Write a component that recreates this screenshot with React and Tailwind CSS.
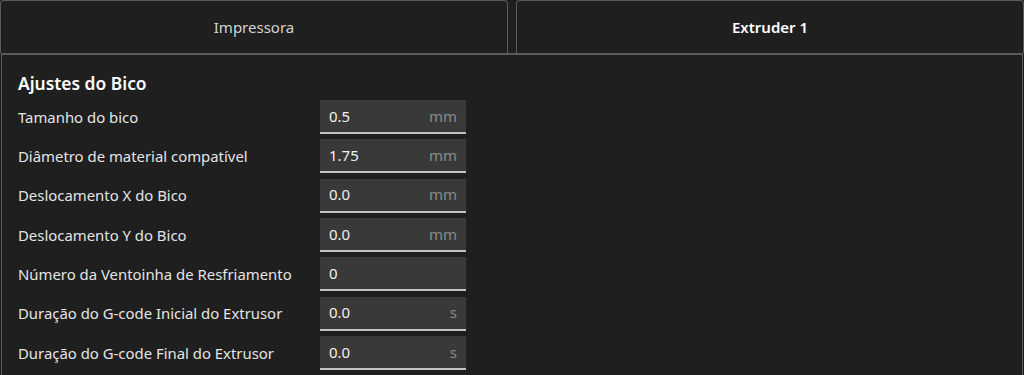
import React from 'react';

const rows = [
  { label: 'Tamanho do bico', value: '0.5', unit: 'mm' },
  { label: 'Diâmetro de material compatível', value: '1.75', unit: 'mm' },
  { label: 'Deslocamento X do Bico', value: '0.0', unit: 'mm' },
  { label: 'Deslocamento Y do Bico', value: '0.0', unit: 'mm' },
  { label: 'Número da Ventoinha de Resfriamento', value: '0', unit: '' },
  { label: 'Duração do G-code Inicial do Extrusor', value: '0.0', unit: 's' },
  { label: 'Duração do G-code Final do Extrusor', value: '0.0', unit: 's' },
];

const Tab = ({ label, active }) => (
  <div className="flex-1 h-[53px] border-t border-l border-r border-[#5a5a5a] rounded-t-[4px] flex items-center justify-center">
    <span
      className={`text-[15px] ${active ? 'font-semibold text-white' : 'text-[#d4d4d4]'}`}
    >
      {label}
    </span>
  </div>
);

const App = () => {
  return (
    <div
      className="w-[1024px] h-[375px] overflow-hidden bg-[#1f1f1f] flex flex-col"
      style={{ fontFamily: '"Noto Sans", "Open Sans", sans-serif' }}
    >
      <div className="flex gap-[8px]">
        <Tab label="Impressora" />
        <Tab label="Extruder 1" active />
      </div>

      <div className="flex-1 mx-px border-t-2 border-l border-r border-[#5a5a5a] pl-[16px] pt-[15px]">
        <h3 className="text-[17.4px] font-semibold text-white leading-[26px]">Ajustes do Bico</h3>
        <div className="mt-[4px] flex flex-col gap-[5.33px]">
          {rows.map((row, index) => (
            <div key={index} className="flex items-center h-[34px]">
              <span className="w-[302px] text-[14.9px] text-[#e4e4e4]">{row.label}</span>
              <div className="w-[146px] h-[34px] bg-[#393939] border-b-2 border-[#c2c2c2] flex items-center justify-between pl-[9px] pr-[9px]">
                <span className="text-[15px] text-[#f0f0f0]">{row.value}</span>
                <span className="text-[15px] text-[#8a8a8a]">{row.unit}</span>
              </div>
            </div>
          ))}
        </div>
      </div>
    </div>
  );
};

export default App;
